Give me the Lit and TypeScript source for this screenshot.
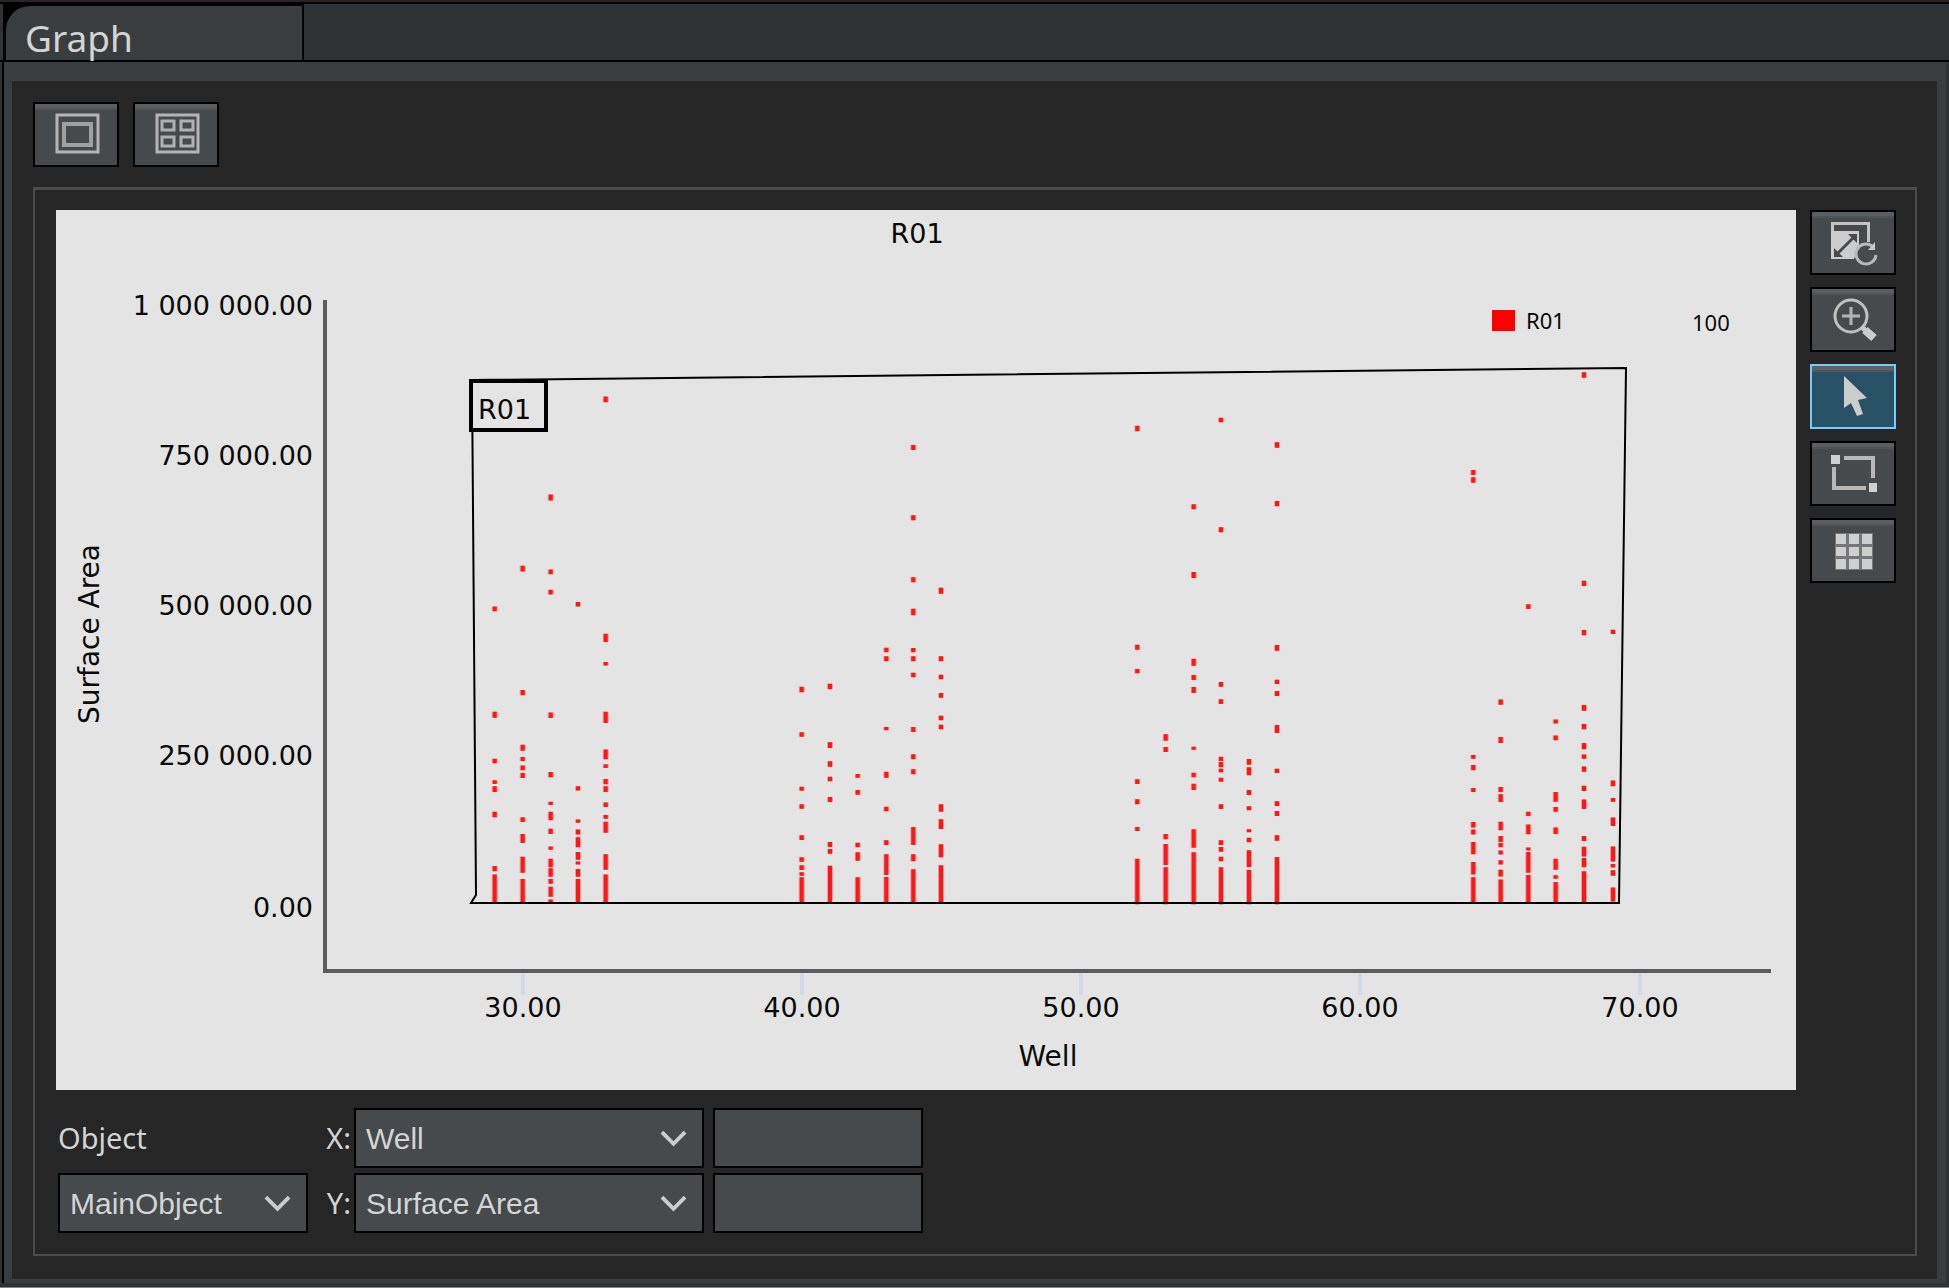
import { LitElement, html, svg, css } from "lit";
import { customElement, property, state } from "lit/decorators.js";
import { classMap } from "lit/directives/class-map.js";

/** Scatter marks of one well: [x, start, end, start, end, ...]. */
type Column = number[];

/**
 * A cluster of neighbouring wells that share one origin on the chart.
 * `rise` is the number of vertical units per chart pixel; x has three.
 */
interface Cluster {
  left: number;
  top: number;
  rise: number;
  columns: Column[];
}

const CLUSTERS: Cluster[] = [
  {
    left: 394,
    top: 130,
    rise: 2.703,
    columns: [
      [134, 720, 733, 1005, 1021, 1132, 1144, 1190, 1200, 1206, 1222, 1275, 1290, 1422, 1436, 1445, 1524],
      [218, 610, 626, 946, 960, 1094, 1110, 1127, 1138, 1150, 1163, 1170, 1184, 1290, 1303, 1335, 1360, 1397, 1440, 1457, 1524],
      [302, 418, 434, 620, 633, 675, 688, 1007, 1022, 1168, 1182, 1248, 1257, 1275, 1298, 1321, 1335, 1369, 1378, 1402, 1425, 1428, 1451, 1457, 1470, 1478, 1505, 1512, 1524],
      [384, 708, 720, 1206, 1218, 1296, 1305, 1323, 1337, 1344, 1371, 1384, 1405, 1410, 1418, 1430, 1451, 1457, 1524],
      [467, 153, 168, 794, 816, 870, 880, 1005, 1035, 1107, 1133, 1147, 1157, 1187, 1201, 1206, 1222, 1250, 1262, 1284, 1294, 1302, 1332, 1390, 1432, 1445, 1524],
    ],
  },
  {
    left: 724,
    top: 210,
    rise: 3,
    columns: [
      [65, 800, 817, 937, 950, 1100, 1112, 1153, 1166, 1246, 1260, 1312, 1325, 1336, 1350, 1357, 1367, 1372, 1452],
      [150, 791, 808, 967, 984, 1024, 1040, 1070, 1084, 1131, 1146, 1266, 1281, 1287, 1301, 1337, 1452],
      [233, 1062, 1073, 1110, 1124, 1268, 1282, 1297, 1322, 1372, 1452],
      [319, 683, 697, 709, 724, 921, 931, 1055, 1073, 1160, 1174, 1261, 1275, 1303, 1365, 1371, 1452],
      [400, 75, 90, 286, 301, 472, 487, 566, 586, 684, 697, 709, 724, 758, 772, 921, 936, 1003, 1018, 1048, 1063, 1221, 1275, 1303, 1324, 1348, 1452],
      [483, 503, 521, 709, 724, 764, 778, 819, 833, 887, 901, 914, 928, 1153, 1175, 1198, 1227, 1273, 1312, 1336, 1452],
    ],
  },
  {
    left: 1054,
    top: 190,
    rise: 3,
    columns: [
      [82, 77, 94, 734, 749, 807, 820, 1138, 1152, 1198, 1213, 1281, 1293, 1376, 1513],
      [167, 1003, 1022, 1041, 1056, 1302, 1318, 1332, 1395, 1402, 1513],
      [251, 313, 328, 516, 534, 776, 797, 825, 840, 861, 879, 1040, 1049, 1118, 1132, 1151, 1170, 1288, 1343, 1357, 1513],
      [333, 53, 67, 382, 397, 846, 860, 898, 912, 1070, 1083, 1086, 1102, 1106, 1117, 1133, 1145, 1213, 1227, 1321, 1335, 1341, 1355, 1370, 1384, 1402, 1513],
      [417, 1077, 1094, 1102, 1126, 1170, 1185, 1219, 1231, 1288, 1297, 1313, 1327, 1351, 1401, 1410, 1513],
      [501, 127, 143, 303, 319, 735, 752, 839, 852, 873, 888, 975, 999, 1106, 1119, 1204, 1218, 1233, 1248, 1306, 1322, 1371, 1513],
    ],
  },
  {
    left: 1394,
    top: 130,
    rise: 2.703,
    columns: [
      [70, 351, 365, 371, 386, 1122, 1132, 1149, 1163, 1211, 1222, 1303, 1318, 1323, 1337, 1357, 1390, 1411, 1445, 1452, 1524],
      [152, 972, 986, 1073, 1089, 1208, 1222, 1228, 1249, 1302, 1325, 1341, 1357, 1360, 1371, 1380, 1391, 1406, 1418, 1432, 1450, 1458, 1524],
      [235, 714, 727, 1275, 1287, 1310, 1336, 1372, 1380, 1384, 1440, 1446, 1524],
      [317, 1026, 1037, 1069, 1082, 1222, 1248, 1262, 1275, 1318, 1335, 1402, 1432, 1447, 1456, 1465, 1524],
      [402, 87, 102, 651, 665, 784, 798, 987, 1002, 1038, 1052, 1089, 1106, 1120, 1132, 1153, 1167, 1205, 1219, 1242, 1268, 1341, 1354, 1370, 1396, 1400, 1425, 1436, 1524],
      [489, 783, 795, 1191, 1206, 1238, 1248, 1291, 1314, 1369, 1410, 1416, 1426, 1433, 1448, 1480, 1518],
    ],
  },
];

const Y_TICKS: [string, number][] = [
  ["1 000 000.00", 105],
  ["750 000.00", 255],
  ["500 000.00", 405],
  ["250 000.00", 555],
  ["0.00", 707],
];

const X_TICKS: [string, number][] = [
  ["30.00", 467],
  ["40.00", 746],
  ["50.00", 1025],
  ["60.00", 1304],
  ["70.00", 1584],
];

const columnPath = (cluster: Cluster, column: Column) => {
  const x = cluster.left + column[0] / 3;
  let d = "";
  for (let i = 1; i < column.length; i += 2) {
    const y0 = cluster.top + column[i] / cluster.rise;
    const y1 = cluster.top + column[i + 1] / cluster.rise;
    d += `M${x.toFixed(1)} ${y0.toFixed(1)}V${y1.toFixed(1)}`;
  }
  return d;
};

@customElement("scatter-chart")
export class ScatterChart extends LitElement {
  static styles = css`
    :host {
      display: block;
      min-width: 0;
      background: #e4e4e4;
    }
    .plot {
      display: block;
      width: 100%;
      height: auto;
      font-family: "DejaVu Sans", sans-serif;
      font-size: 27px;
      fill: #0a0a0a;
    }
    .axis-title {
      font-size: 28px;
    }
    .legend {
      font-family: "Noto Sans", sans-serif;
      font-size: 22px;
    }
    .axis {
      fill: none;
      stroke: #5c5c5c;
      stroke-width: 4;
    }
    .tick {
      stroke: #d3d9e8;
      stroke-width: 4;
    }
    .halo {
      fill: none;
      stroke: #ff0000;
      stroke-opacity: 0.3;
      stroke-width: 6;
    }
    .mark {
      fill: none;
      stroke: #ff0000;
      stroke-opacity: 0.85;
      stroke-width: 4;
    }
    .gate {
      fill: none;
      stroke: #000;
      stroke-width: 2;
    }
    .gate-label {
      fill: #e4e4e4;
      stroke: #000;
      stroke-width: 4;
    }
    .swatch {
      fill: #ff0000;
    }
  `;

  render() {
    return html`
      <svg class="plot" viewBox="0 0 1740 880" role="img" aria-label="R01">
        <text x="861" y="33" text-anchor="middle">R01</text>
        ${Y_TICKS.map(([label, y]) => svg`<text x="257" y=${y} text-anchor="end">${label}</text>`)}
        ${X_TICKS.map(
          ([label, x]) => svg`
            <path class="tick" d="M${x} 763V785" />
            <text x=${x} y="807" text-anchor="middle">${label}</text>`,
        )}
        <path class="axis" d="M269 90V761H1715" />
        <text class="axis-title" x="992" y="856" text-anchor="middle">Well</text>
        <text class="axis-title" transform="translate(43 424) rotate(-90)" text-anchor="middle">Surface Area</text>
        ${CLUSTERS.map((cluster) =>
          cluster.columns.map((column) => {
            const d = columnPath(cluster, column);
            return svg`<path class="halo" d=${d} /><path class="mark" d=${d} />`;
          }),
        )}
        <path class="gate" d="M416 170L1570 158L1563 693H415L420 685Z" />
        <rect class="gate-label" x="415" y="171" width="75" height="49" />
        <text x="422" y="209">R01</text>
        <rect class="swatch" x="1436" y="100" width="23" height="21" />
        <text class="legend" x="1470" y="119">R01</text>
        <text class="legend" x="1636" y="121">100</text>
      </svg>
    `;
  }
}

const ICONS = {
  single: svg`
    <rect x="22" y="11" width="41" height="37" fill="none" stroke="#b4b4b4" stroke-width="3" />
    <rect x="29" y="20" width="27" height="21" fill="none" stroke="#a0a0a0" stroke-width="4" />`,
  quad: svg`
    <rect x="22" y="11" width="41" height="37" fill="none" stroke="#b4b4b4" stroke-width="3" />
    <path d="M27 17H39V26H27ZM46 17H58V26H46ZM27 33H39V42H27ZM46 33H58V42H46Z" fill="none" stroke="#b0b0b0" stroke-width="3" />`,
  reset: svg`
    <path d="M20.500 20V11.500H56.500V30" fill="none" stroke="#c4c4c4" stroke-width="3" />
    <path d="M19 19H47V34L42 47H19Z" fill="#cccccc" />
    <path d="M25 42L42 25" stroke="#464a4c" stroke-width="3" />
    <path d="M36 22H45V31ZM22 36V45H31Z" fill="#464a4c" />
    <path d="M60 34A10 10 0 1 0 64 43" fill="none" stroke="#b8b8b8" stroke-width="3" />
    <path d="M56 38L63 30V38Z" fill="#c8c8c8" />`,
  zoom: svg`
    <circle cx="39" cy="27" r="16" fill="none" stroke="#c0c0c0" stroke-width="3" />
    <path d="M39 18V36M30 27H48" stroke="#b4b4b4" stroke-width="3" />
    <path d="M50 38L54 42" stroke="#cccccc" stroke-width="5" />
    <path d="M53 41L62 49" stroke="#cccccc" stroke-width="8" />`,
  pointer: svg`<path d="M32 10V42L39 37L45 50L51 48L46 34L55 32Z" fill="#cccccc" />`,
  region: svg`
    <path d="M32 15H61V35M22 24V45H54" fill="none" stroke="#b8b8b8" stroke-width="4" />
    <path d="M19 12H28V21H19ZM57 40H65V49H57Z" fill="#d0d0d0" />`,
  grid: svg`
    <rect x="23" y="13" width="38" height="37" fill="#74777a" />
    <path d="M24 14H34V24H24ZM37 14H47V24H37ZM50 14H60V24H50ZM24 27H34V36H24ZM37 27H47V36H37ZM50 27H60V36H50ZM24 39H34V49H24ZM37 39H47V49H37ZM50 39H60V49H50Z" fill="#cfcfcf" />`,
};

type IconName = keyof typeof ICONS;

@customElement("tool-button")
export class ToolButton extends LitElement {
  static styles = css`
    :host {
      display: block;
    }
    .button {
      display: block;
      box-sizing: border-box;
      width: 86px;
      height: 65px;
      margin: 0;
      padding: 0;
      border: 2px solid #000;
      background: linear-gradient(#5b5e61 0 4px, #505457 4px 6px, #464a4c 6px);
    }
    .active {
      border-color: #78cbf8;
      background: linear-gradient(#5f6163 0 4px, #465964 4px 6px, #295166 6px);
    }
    .icon {
      display: block;
      width: 82px;
      height: 61px;
    }
  `;

  @property() icon: IconName = "single";
  @property() label = "";
  @property({ type: Boolean }) active = false;

  render() {
    return html`
      <button class=${classMap({ button: true, active: this.active })} type="button" aria-label=${this.label}>
        <svg class="icon" viewBox="0 0 82 61" aria-hidden="true">${ICONS[this.icon]}</svg>
      </button>
    `;
  }
}

@customElement("app-root")
export class AppRoot extends LitElement {
  static styles = css`
    :host {
      display: flex;
      flex-direction: column;
      box-sizing: border-box;
      min-height: 100vh;
      border-top: 2px solid #282424;
      border-bottom: 1px solid #858585;
      background: #2e3235;
      color: #d4d4d4;
      font-family: "Noto Sans", sans-serif;
    }
    .tabs {
      display: flex;
      box-sizing: border-box;
      height: 60px;
      padding-left: 3px;
      border-top: 2px solid #000;
      border-bottom: 2px solid #000;
    }
    .tab-edge {
      display: flex;
      padding: 2px 2px 0 3px;
      background: #000;
    }
    .tab {
      width: 296px;
      padding: 10px 0 0 19px;
      border: 0;
      border-top-left-radius: 24px;
      background: #3a3d3f;
      color: #d4d4d4;
      font: 37px/44px "Noto Sans", sans-serif;
      text-align: left;
    }
    .frame {
      flex: 1;
      display: flex;
      margin: 0 3px 4px 2px;
      padding: 19px 9px 4px 8px;
      border-left: 2px solid #000;
      background: #3a3d3f;
    }
    .panel {
      flex: 1;
      display: flex;
      flex-direction: column;
      gap: 20px;
      min-width: 0;
      padding: 21px 20px 23px 21px;
      background: #262626;
    }
    .toolbar {
      display: flex;
      gap: 14px;
    }
    .group {
      flex: 1;
      display: flex;
      flex-direction: column;
      gap: 18px;
      padding: 20px 19px 20px 21px;
      border: 2px solid #4a4b4d;
      border-top-width: 3px;
    }
    .content {
      display: flex;
      align-items: flex-start;
      gap: 14px;
    }
    .chart {
      flex: 1;
    }
    .side {
      display: flex;
      flex-direction: column;
      gap: 12px;
    }
    .fields {
      display: grid;
      grid-template-columns: 250px 46px 350px 219px;
      grid-template-rows: 60px 60px;
      row-gap: 5px;
      align-items: center;
      padding-left: 2px;
    }
    .label {
      font-size: 29px;
      line-height: 60px;
    }
    .axis-label {
      padding-right: 3px;
      text-align: right;
    }
    .drop {
      display: grid;
      grid-template-columns: 1fr 44px;
      align-items: center;
    }
    .select {
      grid-area: 1 / 1 / 2 / 3;
      appearance: none;
      box-sizing: border-box;
      width: 100%;
      height: 60px;
      margin: 0;
      padding: 0 44px 0 10px;
      border: 2px solid #000;
      border-radius: 0;
      background: #464a4c;
      color: #d4d4d4;
      font: 30px "Liberation Sans", sans-serif;
    }
    .chevron {
      grid-area: 1 / 2 / 2 / 3;
      width: 27px;
      height: 18px;
      pointer-events: none;
    }
    .value {
      box-sizing: border-box;
      width: 210px;
      height: 60px;
      margin: 0 0 0 9px;
      padding: 0 10px;
      border: 2px solid #000;
      background: #464a4c;
      color: #d4d4d4;
      font: 30px "Liberation Sans", sans-serif;
    }
  `;

  @state() private tool: IconName = "pointer";

  private tools: [IconName, string][] = [
    ["reset", "Reset view"],
    ["zoom", "Zoom in"],
    ["pointer", "Select"],
    ["region", "Draw region"],
    ["grid", "Grid"],
  ];

  private drop(id: string, value: string) {
    return html`
      <div class="drop">
        <select class="select" id=${id}>
          <option>${value}</option>
        </select>
        <svg class="chevron" viewBox="0 0 28 18" aria-hidden="true">
          <path d="M2 3L14 15L26 3" fill="none" stroke="#cccccc" stroke-width="4" />
        </svg>
      </div>
    `;
  }

  render() {
    return html`
      <div class="tabs" role="tablist">
        <div class="tab-edge">
          <button class="tab" type="button" role="tab" aria-selected="true">Graph</button>
        </div>
      </div>
      <div class="frame">
        <main class="panel">
          <div class="toolbar">
            <tool-button icon="single" label="Single graph"></tool-button>
            <tool-button icon="quad" label="Four graphs"></tool-button>
          </div>
          <section class="group">
            <div class="content">
              <scatter-chart class="chart"></scatter-chart>
              <div class="side">
                ${this.tools.map(
                  ([icon, label]) => html`<tool-button
                    icon=${icon}
                    label=${label}
                    ?active=${this.tool === icon}
                    @click=${() => (this.tool = icon)}
                  ></tool-button>`,
                )}
              </div>
            </div>
            <div class="fields">
              <label class="label" for="object">Object</label>
              <label class="label axis-label" for="x-feature">X:</label>
              ${this.drop("x-feature", "Well")}
              <input class="value" type="text" aria-label="X value" />
              ${this.drop("object", "MainObject")}
              <label class="label axis-label" for="y-feature">Y:</label>
              ${this.drop("y-feature", "Surface Area")}
              <input class="value" type="text" aria-label="Y value" />
            </div>
          </section>
        </main>
      </div>
    `;
  }
}
